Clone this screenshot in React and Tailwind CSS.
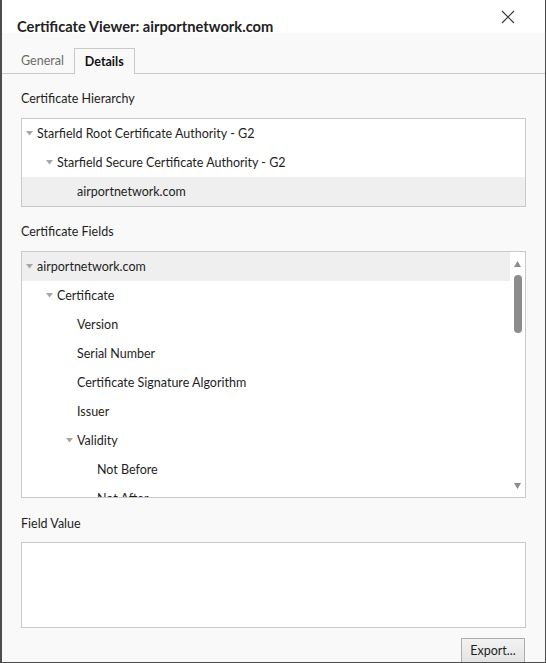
import React from 'react';

const font = { fontFamily: 'Lato, "Noto Sans", Arial, sans-serif' };

function Caret() {
  return (
    <svg width="7" height="5" viewBox="0 0 7 5" className="shrink-0">
      <polygon points="0,0 7,0 3.5,4.5" fill="#a6a6a6" />
    </svg>
  );
}

function TreeRow({ level, label, expandable, selected }) {
  const pad = ['pl-[4px]', 'pl-[24px]', 'pl-[44px]', 'pl-[64px]'][level];
  return (
    <div className={`h-[29px] flex items-center whitespace-nowrap ${pad} ${selected ? 'bg-[#efefef]' : ''}`}>
      <div className="w-[11px] shrink-0 flex items-center">{expandable && <Caret />}</div>
      <span className="pt-[2px]">{label}</span>
    </div>
  );
}

export default function App() {
  const fields = [
    { level: 0, label: 'airportnetwork.com', expandable: true, selected: true },
    { level: 1, label: 'Certificate', expandable: true },
    { level: 2, label: 'Version' },
    { level: 2, label: 'Serial Number' },
    { level: 2, label: 'Certificate Signature Algorithm' },
    { level: 2, label: 'Issuer' },
    { level: 2, label: 'Validity', expandable: true },
    { level: 3, label: 'Not Before' },
    { level: 3, label: 'Not After' },
  ];

  return (
    <div
      style={font}
      className="w-[546px] h-[663px] bg-[#f9f9f9] border-l-2 border-r border-b border-[#4d4d4d] flex flex-col overflow-hidden text-[12.5px] text-[#1e1e1e]"
    >
      {/* Title bar */}
      <div className="h-[33px] bg-white flex justify-between shrink-0">
        <div className="pl-[15px] pt-[16px] leading-[20px] text-[14.7px] font-bold text-[#222]">
          Certificate Viewer: airportnetwork.com
        </div>
        <button className="mt-[10px] mr-[30px] h-[14px] w-[14px]">
          <svg width="14" height="14" viewBox="0 0 14 14">
            <path d="M1 1 L13 13 M13 1 L1 13" stroke="#333" strokeWidth="1.1" />
          </svg>
        </button>
      </div>

      {/* Tabs */}
      <div className="h-[41px] shrink-0 flex items-end border-b border-[#c9c9c9] pl-[19px]">
        <div className="h-[25px] flex items-center pt-px text-[12.5px] text-[#6b6b6b] pr-[10px]">General</div>
        <div className="h-[26px] -mb-px px-[10px] pt-px flex items-center border border-b-0 border-[#c9c9c9] bg-[#f9f9f9] text-[12.5px] font-bold text-[#111]">
          Details
        </div>
      </div>

      <div className="flex flex-col px-[19px]">
        <div className="mt-[15px] leading-[20px]">Certificate Hierarchy</div>
        <div className="mt-[9px] border border-[#c9c9c9] bg-white">
          <TreeRow level={0} label="Starfield Root Certificate Authority - G2" expandable />
          <TreeRow level={1} label="Starfield Secure Certificate Authority - G2" expandable />
          <TreeRow level={2} label="airportnetwork.com" selected />
        </div>

        <div className="mt-[15px] leading-[20px]">Certificate Fields</div>
        <div className="mt-[9px] h-[247px] border border-[#c9c9c9] bg-white flex overflow-hidden">
          <div className="flex-1 overflow-hidden">
            {fields.map((f) => (
              <TreeRow key={f.label} {...f} />
            ))}
          </div>
          <div className="w-[15px] flex flex-col items-center">
            <svg width="7" height="6" viewBox="0 0 7 6" className="mt-[9px]">
              <polygon points="3.5,0 7,6 0,6" fill="#8c8c8c" />
            </svg>
            <div className="mt-[8px] w-[8px] h-[58px] rounded-full bg-[#8c8c8c]" />
            <div className="flex-1" />
            <svg width="7" height="6" viewBox="0 0 7 6" className="mb-[8px]">
              <polygon points="0,0 7,0 3.5,6" fill="#8c8c8c" />
            </svg>
          </div>
        </div>

        <div className="mt-[16px] leading-[20px]">Field Value</div>
        <div className="mt-[8px] h-[86px] border border-[#c9c9c9] bg-white" />

        <div className="mt-[10px] flex justify-end">
          <button className="h-[28px] w-[64px] mr-px border border-[#adadad] bg-gradient-to-b from-[#f2f2f2] to-[#e2e2e2] text-[12.5px] text-[#1e1e1e] pb-[2px]">
            Export...
          </button>
        </div>
      </div>
    </div>
  );
}
